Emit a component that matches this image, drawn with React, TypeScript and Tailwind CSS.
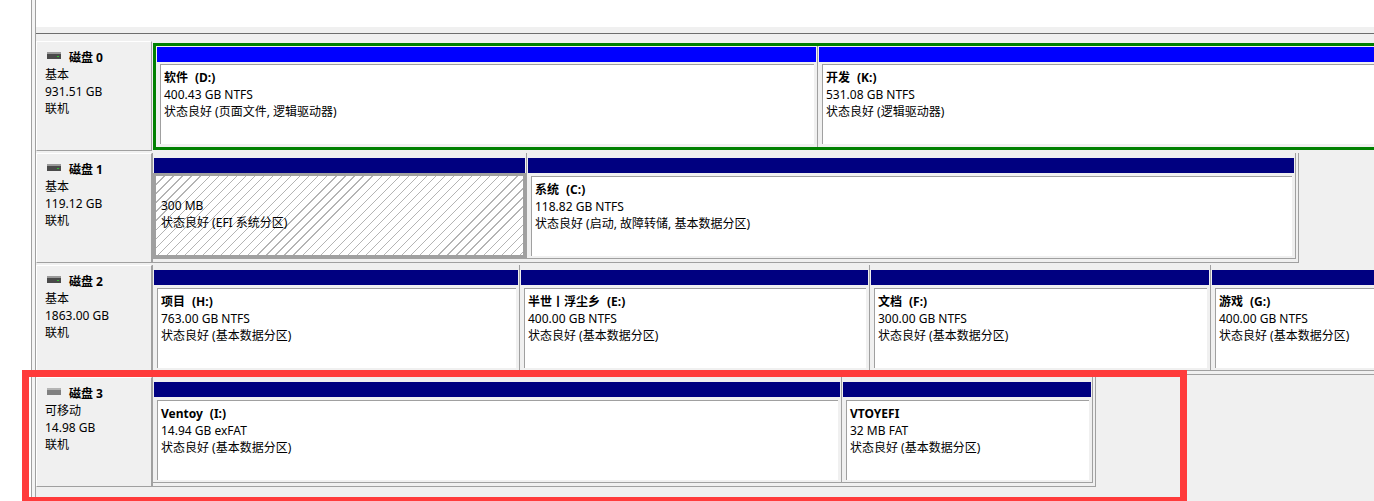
type Part = {
  w: string;
  label?: string;
  letter?: string;
  fs: string;
  status: string;
  selected?: boolean;
};

type Disk = {
  name: string;
  kind: string;
  size: string;
  removable?: boolean;
  extended?: boolean;
  parts: Part[];
};

const disks: Disk[] = [
  {
    name: "磁盘 0",
    kind: "基本",
    size: "931.51 GB",
    extended: true,
    parts: [
      { w: "w-[662px]", label: "软件", letter: "(D:)", fs: "400.43 GB NTFS", status: "状态良好 (页面文件, 逻辑驱动器)" },
      { w: "w-[720px]", label: "开发", letter: "(K:)", fs: "531.08 GB NTFS", status: "状态良好 (逻辑驱动器)" },
    ],
  },
  {
    name: "磁盘 1",
    kind: "基本",
    size: "119.12 GB",
    parts: [
      { w: "w-[374px]", fs: "300 MB", status: "状态良好 (EFI 系统分区)", selected: true },
      { w: "w-[769px]", label: "系统", letter: "(C:)", fs: "118.82 GB NTFS", status: "状态良好 (启动, 故障转储, 基本数据分区)" },
    ],
  },
  {
    name: "磁盘 2",
    kind: "基本",
    size: "1863.00 GB",
    parts: [
      { w: "w-[367px]", label: "项目", letter: "(H:)", fs: "763.00 GB NTFS", status: "状态良好 (基本数据分区)" },
      { w: "w-[350px]", label: "半世丨浮尘乡", letter: "(E:)", fs: "400.00 GB NTFS", status: "状态良好 (基本数据分区)" },
      { w: "w-[341px]", label: "文档", letter: "(F:)", fs: "300.00 GB NTFS", status: "状态良好 (基本数据分区)" },
      { w: "w-[400px]", label: "游戏", letter: "(G:)", fs: "400.00 GB NTFS", status: "状态良好 (基本数据分区)" },
    ],
  },
  {
    name: "磁盘 3",
    kind: "可移动",
    size: "14.98 GB",
    removable: true,
    parts: [
      { w: "w-[689px]", label: "Ventoy", letter: "(I:)", fs: "14.94 GB exFAT", status: "状态良好 (基本数据分区)" },
      { w: "w-[251px]", label: "VTOYEFI", fs: "32 MB FAT", status: "状态良好 (基本数据分区)" },
    ],
  },
];

function DiskIcon({ removable }: { removable?: boolean }) {
  return (
    <svg width="14" height="7" viewBox="0 0 14 7" className="mb-[5px] ml-[2px] mr-[8px] shrink-0">
      <rect x="0" y="0" width="14" height="7" fill={removable ? "#808080" : "#4a4a4a"} />
      <rect x="0" y="0" width="14" height="2" fill={removable ? "#b4b4b4" : "#9a9a9a"} />
      {!removable && <rect x="10" y="4" width="2" height="1" fill="#2fc02f" />}
    </svg>
  );
}

function PartText({ p }: { p: Part }) {
  return (
    <>
      <div className="h-[17px] whitespace-nowrap font-bold">
        {p.label}
        {p.letter && <span className="ml-[7px]">{p.letter}</span>}
      </div>
      <div className="whitespace-nowrap">{p.fs}</div>
      <div className="whitespace-nowrap">{p.status}</div>
    </>
  );
}

function Cell({ p, blue }: { p: Part; blue?: boolean }) {
  if (blue) {
    return (
      <div className={`${p.w} flex shrink-0 flex-col border-r border-[#a0a0a0] px-px pt-px`}>
        <div className="h-[15px] shrink-0 bg-[#0000ff]" />
        <div className="mb-[3px] ml-[3px] mr-[2px] mt-[2px] flex-1 overflow-hidden border-l border-t border-[#a0a0a0] bg-white pl-[3px] pt-[4px]">
          <PartText p={p} />
        </div>
      </div>
    );
  }
  return (
    <div className={`${p.w} flex shrink-0 flex-col border-b border-r border-[#a0a0a0] px-px pt-[5px]`}>
      <div className="h-[15px] shrink-0 bg-[#000080]" />
      {p.selected ? (
        <div className="-mx-px flex-1 overflow-hidden border-[3px] border-[#a0a0a0] bg-[repeating-linear-gradient(135deg,#ffffff_0px,#ffffff_5.5px,#b4b4b4_5.5px,#b4b4b4_6.4px)] pl-[5px] pt-[4px]">
          <PartText p={p} />
        </div>
      ) : (
        <div className="mb-[2px] ml-[3px] mr-[2px] mt-[3px] flex-1 overflow-hidden border-l border-t border-[#a0a0a0] bg-white pl-[3px] pt-[4px]">
          <PartText p={p} />
        </div>
      )}
    </div>
  );
}

function DiskRow({ d }: { d: Disk }) {
  return (
    <div className="flex h-[110px] shrink-0">
      <div className="w-[116px] shrink-0 border border-white border-b-[#a0a0a0] border-r-[#a0a0a0] bg-[#f0f0f0] pl-[8px] pt-[7px]">
        <div className="flex items-center font-bold">
          <DiskIcon removable={d.removable} />
          {d.name}
        </div>
        <div>{d.kind}</div>
        <div>{d.size}</div>
        <div>联机</div>
      </div>
      {d.extended ? (
        <div className="ml-px mt-[2px] flex h-[107px] shrink-0 border-[3px] border-[#008000]">
          {d.parts.map((p, i) => (
            <Cell key={i} p={p} blue />
          ))}
        </div>
      ) : (
        <div className="flex shrink-0 border-b border-l border-r border-[#a0a0a0] pb-[3px] pr-[2px]">
          {d.parts.map((p, i) => (
            <Cell key={i} p={p} />
          ))}
        </div>
      )}
    </div>
  );
}

export default function App() {
  return (
    <div className="relative h-[501px] w-[1374px] overflow-hidden bg-white font-['Noto_Sans','Noto_Sans_CJK_SC',sans-serif] text-[12px] leading-[17px] text-black">
      <div className="flex h-full">
        <div className="w-[31px] shrink-0 bg-white" />
        <div className="w-px shrink-0 bg-[#a0a0a0]" />
        <div className="w-[3px] shrink-0 bg-[#f4f4f4]" />
        <div className="w-px shrink-0 bg-[#a0a0a0]" />
        <div className="flex min-w-0 flex-1 flex-col bg-[#f0f0f0]">
          <div className="h-[27px] shrink-0 bg-white" />
          <div className="h-[6px] shrink-0 bg-[#f0f0f0]" />
          <div className="h-px shrink-0 bg-[#6d6d6d]" />
          <div className="flex flex-col gap-[2px] pt-[7px]">
            {disks.map((d) => (
              <DiskRow key={d.name} d={d} />
            ))}
          </div>
        </div>
      </div>
      <div className="pointer-events-none absolute left-[22px] top-[370px] h-[134px] w-[1165px] border-[7px] border-[#ff3b3b]" />
    </div>
  );
}
